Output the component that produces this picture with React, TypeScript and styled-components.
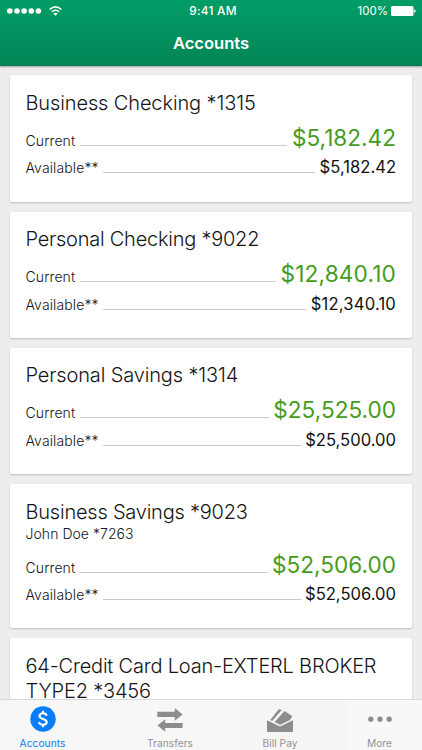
import React from 'react';
import styled, { createGlobalStyle } from 'styled-components';

const GlobalStyle = createGlobalStyle`
  * { box-sizing: border-box; }
  body { margin: 0; background: #ededed; overflow: hidden; }
`;

const Screen = styled.div`
  width: 422px;
  height: 750px;
  display: flex;
  flex-direction: column;
  overflow: hidden;
  background: #ededed;
  color: #151515;
  font-family: Inter, 'Liberation Sans', sans-serif;
  font-feature-settings: 'calt' 0;
`;

const Header = styled.header`
  flex: none;
  height: 66px;
  z-index: 1;
  color: #fff;
  background: linear-gradient(#019d67, #038656);
  border-bottom: 1px solid #0b7a50;
  box-shadow: 0 1px 2px rgba(0, 0, 0, 0.35);
`;

const StatusBar = styled.div`
  height: 22px;
  padding: 0 6px 0 7px;
  display: grid;
  grid-template-columns: 1fr auto 1fr;
  align-items: center;
  font-size: 11.5px;
`;

const Signal = styled.div`
  display: flex;
  align-items: center;
  gap: 7px;
`;

const Clock = styled.span`
  padding-left: 3px;
  font-size: 11.8px;
  font-weight: 500;
  letter-spacing: 0.25px;
`;

const Battery = styled.div`
  display: flex;
  align-items: center;
  justify-content: flex-end;
  gap: 3px;
`;

const PageTitle = styled.h1`
  margin: 11px 0 0;
  text-align: center;
  font-size: 16.6px;
  line-height: 20px;
  font-weight: 600;
  letter-spacing: -0.05px;
`;

const CardList = styled.main`
  flex: 1;
  min-height: 0;
  overflow: hidden;
  padding: 9.4px 10px 0;
  display: flex;
  flex-direction: column;
  gap: 10px;
`;

const Card = styled.section`
  flex: none;
  width: 401.5px;
  padding: 15.6px 15.5px 20.9px;
  background: #fff;
  border-radius: 2px;
  box-shadow: 0 1px 2px rgba(0, 0, 0, 0.2);
`;

const CardTitle = styled.h2<{ $tracking: number }>`
  margin: 0;
  font-size: 20px;
  line-height: 25px;
  font-weight: 300;
  letter-spacing: ${p => p.$tracking}px;
`;

const Owner = styled.div`
  height: 18px;
  font-size: 14px;
  line-height: 18px;
  font-weight: 300;
  letter-spacing: 0.05px;
`;

const BalanceRow = styled.div<{ $tall?: boolean }>`
  display: flex;
  align-items: baseline;
  height: ${p => (p.$tall ? 37.5 : 27.2)}px;
  line-height: ${p => (p.$tall ? 43 : 28)}px;
`;

const Label = styled.span`
  font-size: 14px;
  font-weight: 300;
  letter-spacing: 0.12px;
`;

const Leader = styled.span`
  flex: 1;
  height: 1px;
  margin: 0 4.5px;
  background: #cbcbcb;
`;

const Amount = styled.span<{ $current?: boolean; $tracking?: number }>`
  font-size: ${p => (p.$current ? 22.6 : 16.6)}px;
  color: ${p => (p.$current ? '#459c20' : '#111')};
  letter-spacing: ${p => p.$tracking || 0}px;
`;

const TabBar = styled.nav`
  flex: none;
  height: 51px;
  display: grid;
  grid-template-columns: 85px 170px 50px 1fr;
  background: linear-gradient(90deg, #f7f7f7 240px, #f5f5f5 242px, #f5f5f5 346px, #f8f8f8 348px);
  border-top: 1px solid #d9d9d9;
`;

const Tab = styled.div<{ $active?: boolean }>`
  display: flex;
  flex-direction: column;
  align-items: center;
  color: ${p => (p.$active ? '#087bf5' : '#929292')};

  &:last-child { padding-left: 32px; }
`;

const TabIcon = styled.svg`
  display: block;
  flex: none;
`;

const TabLabel = styled.span`
  margin-top: 4px;
  font-size: 10.2px;
  line-height: 14px;
  letter-spacing: 0.05px;
  white-space: nowrap;
`;

const accounts = [
  { name: 'Business Checking *1315', tracking: -0.12, current: '$5,182.42', available: '$5,182.42' },
  { name: 'Personal Checking *9022', tracking: -0.24, amountTracking: 0.18, current: '$12,840.10', available: '$12,340.10' },
  { name: 'Personal Savings *1314', tracking: -0.14, current: '$25,525.00', available: '$25,500.00' },
  { name: 'Business Savings *9023', tracking: -0.22, owner: 'John Doe *7263', current: '$52,506.00', available: '$52,506.00' },
  { name: '64-Credit Card Loan-EXTERL BROKER TYPE2 *3456', tracking: -0.19, current: '', available: '' },
];

export default function App() {
  return (
    <>
      <GlobalStyle />
      <Screen>
        <Header>
          <StatusBar>
            <Signal>
              <svg width="35" height="6" viewBox="0 0 35 6" fill="#fff">
                {[2.8, 10, 17.1, 24.3, 31.4].map(x => <circle key={x} cx={x} cy="3" r="2.8" />)}
              </svg>
              <svg width="13" height="10" viewBox="0 0 13 10" fill="none" stroke="#fff" strokeWidth="1.5">
                <path d="M.6 3.5Q6.5-1.8 12.4 3.5" />
                <path d="M2.8 5.8Q6.5 2.6 10.2 5.8" />
                <path d="M4.4 7.6Q6.5 5.9 8.6 7.6L6.5 9.7z" fill="#fff" stroke="none" />
              </svg>
            </Signal>
            <Clock>9:41 AM</Clock>
            <Battery>
              <span>100%</span>
              <svg width="25" height="10" viewBox="0 0 25 10" fill="#fff">
                <rect width="22.5" height="10" rx="1.5" />
                <path d="M23.2 3.2q1.5.4 1.5 1.8t-1.5 1.8z" />
              </svg>
            </Battery>
          </StatusBar>
          <PageTitle>Accounts</PageTitle>
        </Header>
        <CardList>
          {accounts.map(a => (
            <Card key={a.name}>
              <CardTitle $tracking={a.tracking}>{a.name}</CardTitle>
              {a.owner && <Owner>{a.owner}</Owner>}
              {a.current && (
                <>
                  <BalanceRow $tall>
                    <Label>Current</Label>
                    <Leader />
                    <Amount $current $tracking={a.amountTracking}>{a.current}</Amount>
                  </BalanceRow>
                  <BalanceRow>
                    <Label>Available**</Label>
                    <Leader />
                    <Amount $tracking={a.amountTracking}>{a.available}</Amount>
                  </BalanceRow>
                </>
              )}
            </Card>
          ))}
        </CardList>
        <TabBar>
          <Tab $active>
            <TabIcon width="26" height="32" viewBox="0 0 26 32">
              <circle cx="13" cy="19" r="12.7" fill="#087dfa" />
              <path d="M16.6 15.7C16.3 14.1 15 13.3 13 13.3c-2.1 0-3.5 1-3.5 2.7 0 3.9 7.2 2 7.2 6 0 1.8-1.5 2.8-3.7 2.8s-3.7-1-3.9-2.8M13 10.8v2.8M13 24.5v2.8" fill="none" stroke="#fff" strokeWidth="2.1" />
            </TabIcon>
            <TabLabel>Accounts</TabLabel>
          </Tab>
          <Tab>
            <TabIcon width="26" height="32" viewBox="0 0 26 32" fill="#8d8d8d">
              <path d="M.3 11.8h17.5V8l7.8 6.4-7.8 6.3V17H.3zM25.6 22.9v5.2H8.2v3.7L.5 25.5l7.7-6.3v3.7z" />
            </TabIcon>
            <TabLabel>Transfers</TabLabel>
          </Tab>
          <Tab>
            <TabIcon width="26" height="32" viewBox="0 0 26 32" fill="#8d8d8d">
              <path d="M0 20.3l13 6.2 13-6.2V31q0 1-1 1H1q-1 0-1-1z" />
              <path d="M7.2 22L16.7 11.4q.8-.9 1.8-.2l6.3 4.3q1 .7.3 1.7l-2 3.2L13 25.2z" stroke="#f5f5f5" strokeWidth=".8" />
              <path d="M3.2 20L11.3 9.8q.7-.8 1.7-.5l1.7.7-9.5 11z" />
            </TabIcon>
            <TabLabel>Bill Pay</TabLabel>
          </Tab>
          <Tab>
            <TabIcon width="26" height="32" viewBox="0 0 26 32" fill="#8d8d8d">
              <circle cx="3.8" cy="19.2" r="2.6" /><circle cx="13" cy="19.2" r="2.6" /><circle cx="22.2" cy="19.2" r="2.6" />
            </TabIcon>
            <TabLabel>More</TabLabel>
          </Tab>
        </TabBar>
      </Screen>
    </>
  );
}
